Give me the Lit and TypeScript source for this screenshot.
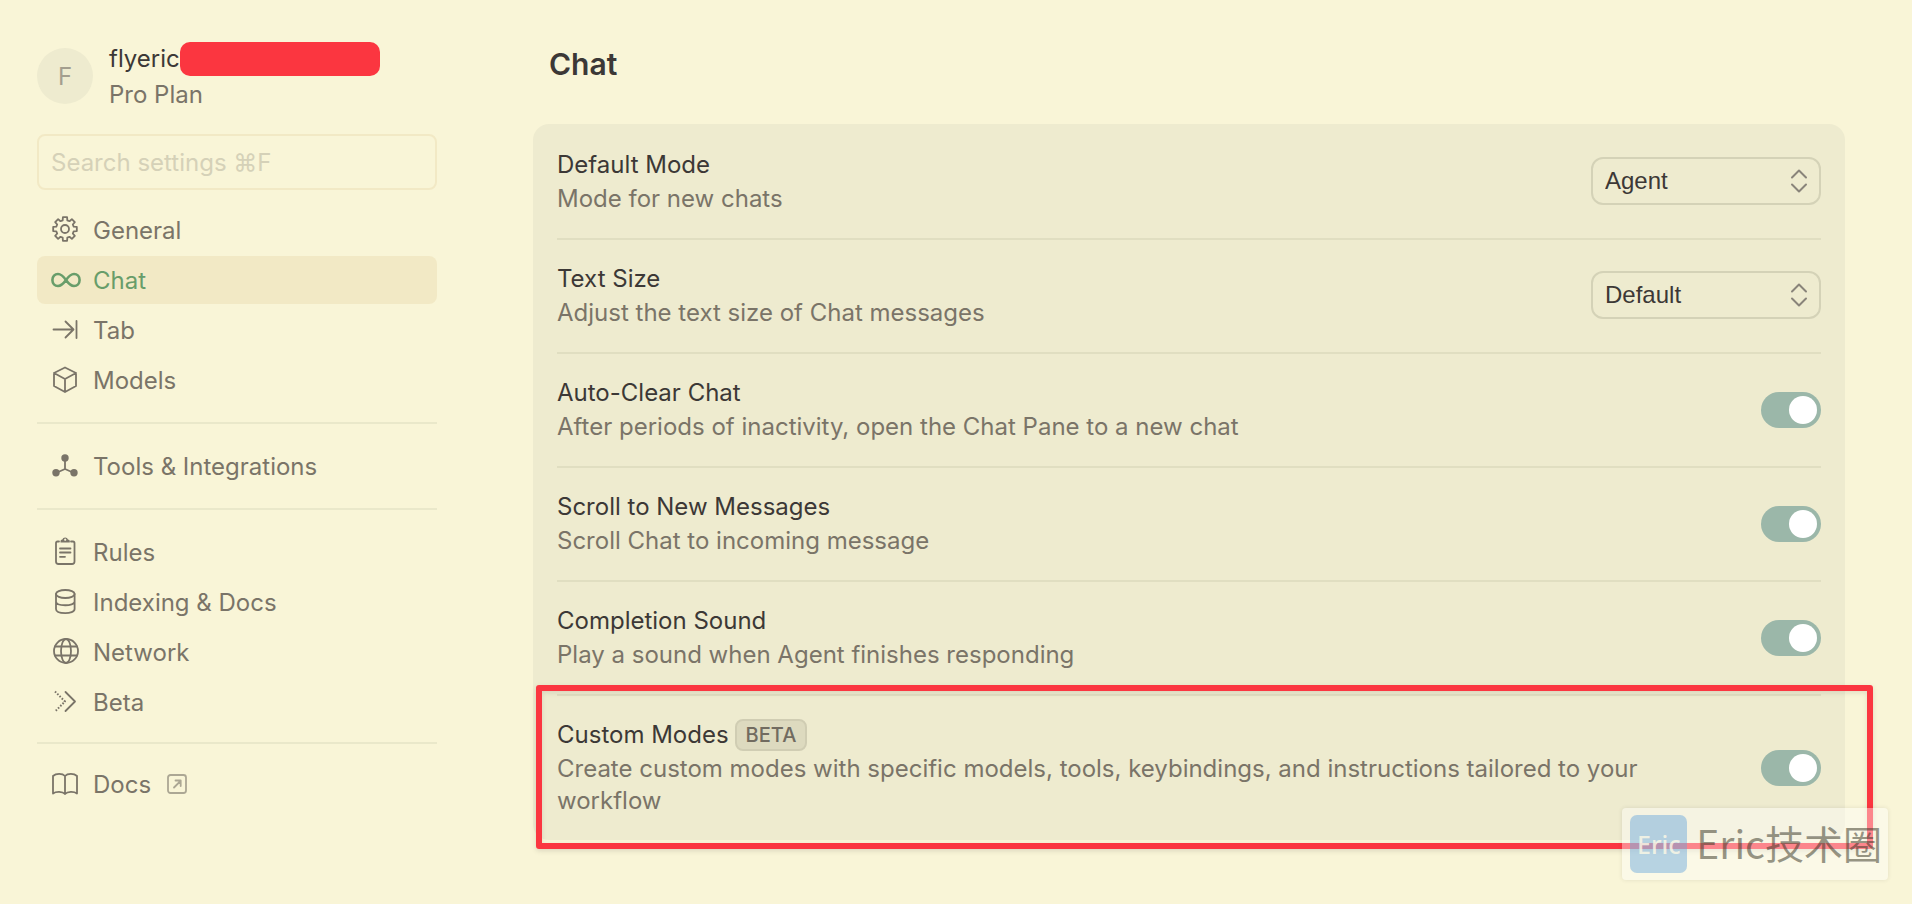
import { LitElement, html, css, svg, nothing, type TemplateResult } from "lit";
import { customElement, property, state } from "lit/decorators.js";
import { classMap } from "lit/directives/class-map.js";

/** Outline of an eight-toothed cog centred on (cx, cy). */
const cogPath = (cx: number, cy: number): string => {
  const points: string[] = [];
  for (let i = 0; i < 8; i++) {
    const mid = i * 45 - 90;
    for (const [radius, offset] of [[9, -15], [12, -10], [12, 10], [9, 15]]) {
      const a = ((mid + offset) * Math.PI) / 180;
      points.push(`${(cx + radius * Math.cos(a)).toFixed(2)} ${(cy + radius * Math.sin(a)).toFixed(2)}`);
    }
  }
  return `M${points.join("L")}Z`;
};

const icons: Record<string, TemplateResult> = {
  general: svg`<path d=${cogPath(14, 13)} /><circle cx="14" cy="13" r="4" />`,
  chat: svg`<path stroke-width="2.6" d="M15 14C12.5 10.5 10.5 8 7 8C3.8 8 1.4 10.6 1.4 14S3.8 20 7 20C10.5 20 12.5 17.5 15 14C17.5 10.5 19.5 8 23 8C26.2 8 28.6 10.6 28.6 14S26.2 20 23 20C19.5 20 17.5 17.5 15 14Z" />`,
  tab: svg`<path d="M2.5 13.5H22M14.5 5.5L22.5 13.5L14.5 21.5M25.5 5V22" />`,
  models: svg`<path d="M14 1.5L25 7V20L14 26L3 20V7ZM3 7L14 13L25 7M14 13V26" />`,
  tools: svg`<path d="M14 6V17M5 21L14 17L23 21" /><g fill="currentColor" stroke="none"><circle cx="14" cy="6" r="3.7" /><circle cx="5" cy="20.8" r="3.7" /><circle cx="23" cy="20.8" r="3.7" /></g>`,
  rules: svg`<path d="M8 3.5H6.5Q5 3.5 5 5V23.5Q5 26 7.5 26H21Q23.5 26 23.5 23.5V5Q23.5 3.5 22 3.5H20M9 10.5H19.5M9 14.5H19.5M9 18.8H14" /><path fill="currentColor" stroke="none" fill-rule="evenodd" d="M9.5 4.5V3Q9.5 1.5 11.3 1.5A3 3 0 0 1 17 1.5Q18.8 1.5 18.8 3V4.5ZM14.2 0.6a1.1 1.1 0 1 0 0.01 0Z" />`,
  indexing: svg`<ellipse cx="14.3" cy="6" rx="9.3" ry="4" /><path d="M5 6V21C5 26.5 23.6 26.5 23.6 21V6M5 13.5C5 18.5 23.6 18.5 23.6 13.5" />`,
  network: svg`<circle cx="15" cy="13" r="12" /><ellipse cx="15" cy="13" rx="5" ry="12" /><path d="M4 8.5H26M4 17.5H26" />`,
  beta: svg`<path d="M14.5 4L24 13.5L14.5 23" /><path stroke-linecap="butt" stroke-width="2" stroke-dasharray="1.6 1.6" d="M4 3.5L14 13.5L4 23.5" />`,
  docs: svg`<path d="M14 6C11.5 3.2 5 3.2 2 6V23.5C5 21.3 11.5 21.3 14 24C16.5 21.3 23 21.3 26 23.5V6C23 3.2 16.5 3.2 14 6ZM14 6V24" />`,
};

interface NavItem {
  id: string;
  label: string;
  external?: boolean;
}

interface Setting {
  id: string;
  title: string;
  detail: string;
  options?: string[];
  badge?: string;
  highlighted?: boolean;
}

const navGroups: NavItem[][] = [
  [
    { id: "general", label: "General" },
    { id: "chat", label: "Chat" },
    { id: "tab", label: "Tab" },
    { id: "models", label: "Models" },
  ],
  [{ id: "tools", label: "Tools & Integrations" }],
  [
    { id: "rules", label: "Rules" },
    { id: "indexing", label: "Indexing & Docs" },
    { id: "network", label: "Network" },
    { id: "beta", label: "Beta" },
  ],
  [{ id: "docs", label: "Docs", external: true }],
];

const settings: Setting[] = [
  { id: "mode", title: "Default Mode", detail: "Mode for new chats", options: ["Agent"] },
  { id: "size", title: "Text Size", detail: "Adjust the text size of Chat messages", options: ["Default"] },
  { id: "clear", title: "Auto-Clear Chat", detail: "After periods of inactivity, open the Chat Pane to a new chat" },
  { id: "scroll", title: "Scroll to New Messages", detail: "Scroll Chat to incoming message" },
  { id: "sound", title: "Completion Sound", detail: "Play a sound when Agent finishes responding" },
  {
    id: "custom",
    title: "Custom Modes",
    detail: "Create custom modes with specific models, tools, keybindings, and instructions tailored to your workflow",
    badge: "BETA",
    highlighted: true,
  },
];

@customElement("settings-row")
class SettingsRow extends LitElement {
  @property({ attribute: false }) setting!: Setting;

  static styles = css`
    :host {
      display: block;
    }
    .row {
      position: relative;
      display: flex;
      align-items: center;
      justify-content: space-between;
      gap: 48px;
      padding: 23px 0;
      border-top: 2px solid var(--row-line, #e0dec1);
    }
    .text {
      display: flex;
      flex-direction: column;
      gap: 2px;
      min-width: 0;
    }
    .head {
      display: flex;
      align-items: center;
      gap: 6px;
      height: 32px;
    }
    .detail {
      margin: 0;
      color: #7a7468;
    }
    .badge {
      box-sizing: border-box;
      height: 32px;
      padding: 0 9px;
      border: 2px solid #d0cdb3;
      border-radius: 8px;
      background: #dddabf;
      color: #716b60;
      font-size: 20px;
      line-height: 28px;
      font-weight: 500;
    }
    .picker {
      position: relative;
      flex: 0 0 230px;
      padding-bottom: 2px;
    }
    .select {
      box-sizing: border-box;
      display: block;
      width: 100%;
      height: 48px;
      padding: 0 44px 2px 12px;
      appearance: none;
      border: 2px solid #d4d2b7;
      border-radius: 12px;
      background: transparent;
      color: #3c3836;
      font: 24px "Liberation Sans", Arial, sans-serif;
    }
    .arrows {
      position: absolute;
      top: 12px;
      right: 13px;
      width: 18px;
      height: 24px;
      pointer-events: none;
      fill: none;
      stroke: #89847a;
      stroke-width: 2;
      stroke-linecap: round;
      stroke-linejoin: round;
    }
    .toggle {
      flex: none;
      display: flex;
      align-items: center;
      box-sizing: border-box;
      width: 60px;
      height: 36px;
      margin: 0;
      padding: 4px;
      appearance: none;
      border-radius: 18px;
      background: #cfccb3;
    }
    .toggle::before {
      content: "";
      width: 28px;
      height: 28px;
      border-radius: 50%;
      background: #fff;
    }
    .toggle:checked {
      justify-content: flex-end;
      background: #9bb7a9;
    }
    .frame {
      position: absolute;
      inset: -11px -52px -9px -21px;
      border: 6px solid #fb3640;
      border-radius: 3px;
      box-shadow: 0 2px 5px rgba(60, 56, 54, 0.15), inset 0 2px 5px rgba(60, 56, 54, 0.12);
      pointer-events: none;
    }
  `;

  render() {
    const s = this.setting;
    return html`
      <div class="row">
        <div class="text">
          <div class="head">
            <label for="control">${s.title}</label>
            ${s.badge ? html`<span class="badge">${s.badge}</span>` : nothing}
          </div>
          <p class="detail" id="detail">${s.detail}</p>
        </div>
        ${s.options
          ? html`<div class="picker">
              <select class="select" id="control" aria-describedby="detail">
                ${s.options.map((o) => html`<option>${o}</option>`)}
              </select>
              <svg class="arrows" viewBox="0 0 18 24" aria-hidden="true">
                <path d="M2 8.5L9 1.5L16 8.5M2 15.5L9 22.5L16 15.5" />
              </svg>
            </div>`
          : html`<input class="toggle" id="control" type="checkbox" role="switch" aria-describedby="detail" checked />`}
        ${s.highlighted ? html`<div class="frame"></div>` : nothing}
      </div>
    `;
  }
}

@customElement("app-root")
class AppRoot extends LitElement {
  @state() private current = "chat";

  static styles = css`
    :host {
      position: relative;
      display: flex;
      align-items: flex-start;
      gap: 96px;
      box-sizing: border-box;
      min-height: 100vh;
      padding: 40px 67px 24px 37px;
      background: #f9f5d7;
      color: #3c3836;
      font: 24px/32px Inter, "Noto Sans", sans-serif;
    }
    .sidebar {
      flex: 0 0 400px;
    }
    .account {
      display: flex;
      align-items: center;
      gap: 16px;
      height: 72px;
      margin-bottom: 22px;
      line-height: 36px;
    }
    .avatar {
      display: grid;
      place-items: center;
      width: 56px;
      height: 56px;
      border-radius: 50%;
      background: #eeebcf;
      color: #a39e8e;
    }
    .who,
    .label {
      padding-top: 2px;
    }
    .name {
      display: flex;
      align-items: center;
    }
    .redaction {
      width: 200px;
      height: 34px;
      border-radius: 10px;
      background: #fb3640;
    }
    .plan,
    .item {
      color: #7a7468;
    }
    .search {
      display: block;
      box-sizing: border-box;
      width: 100%;
      height: 56px;
      margin-bottom: 16px;
      padding: 0 12px;
      border: 2px solid #f2e9c5;
      border-radius: 8px;
      background: transparent;
      color: inherit;
      font: inherit;
    }
    .search::placeholder {
      color: #d5d1b8;
      opacity: 1;
    }
    .group {
      display: flex;
      flex-direction: column;
      gap: 2px;
      margin: 0;
      padding: 0 0 18px;
      list-style: none;
    }
    .group + .group {
      padding-top: 18px;
      border-top: 2px solid #eae8ca;
    }
    .group:nth-last-child(2) {
      padding-bottom: 16px;
    }
    .group:last-child {
      padding-top: 16px;
    }
    .item {
      display: flex;
      align-items: center;
      gap: 14px;
      height: 48px;
      padding: 0 14px;
      border-radius: 8px;
      box-sizing: border-box;
      text-decoration: none;
    }
    .item.active {
      background: #f2e9c5;
      color: #689d6a;
    }
    .icon,
    .external {
      flex: none;
      overflow: visible;
      fill: none;
      stroke: currentColor;
      stroke-width: 1.8;
      stroke-linecap: round;
      stroke-linejoin: round;
    }
    .icon {
      width: 28px;
      height: 28px;
    }
    .external {
      width: 20px;
      height: 20px;
      margin-left: 2px;
      opacity: 0.6;
    }
    .content {
      flex: 1;
      min-width: 0;
    }
    .heading {
      margin: 0 0 40px;
      padding: 4px 16px 0;
      font-size: 30px;
      line-height: 40px;
      font-weight: 600;
    }
    .panel {
      padding: 0 24px;
      border-radius: 16px;
      background: #eeebcf;
    }
    .panel > :first-child {
      --row-line: transparent;
    }
    .watermark {
      position: absolute;
      right: 24px;
      bottom: 24px;
      display: flex;
      align-items: center;
      gap: 9px;
      box-sizing: border-box;
      height: 72px;
      padding: 0 6px 0 8px;
      border-radius: 4px;
      background: rgba(255, 255, 255, 0.4);
      box-shadow: 0 0 4px rgba(60, 56, 54, 0.12);
      color: rgba(50, 48, 30, 0.5);
      font: 39px/48px "Noto Sans CJK SC", sans-serif;
    }
    .brand {
      padding-bottom: 4px;
    }
    .mark {
      display: grid;
      place-items: center;
      width: 57px;
      height: 58px;
      border-radius: 7px;
      background: rgba(100, 165, 220, 0.45);
      color: rgba(255, 250, 230, 0.8);
      font: 500 25px/32px "Noto Sans", sans-serif;
    }
  `;

  private renderItem(item: NavItem) {
    return html`<li>
      <a
        class=${classMap({ item: true, active: item.id === this.current })}
        href="#${item.id}"
        aria-current=${item.id === this.current ? "page" : nothing}
        @click=${() => {
          if (!item.external) this.current = item.id;
        }}
      >
        <svg class="icon" viewBox="0 0 28 28" aria-hidden="true">${icons[item.id]}</svg>
        <span class="label">${item.label}</span>
        ${item.external
          ? html`<svg class="external" viewBox="0 0 20 20" aria-hidden="true">
              <rect x="1" y="1" width="18" height="18" rx="2.5" />
              <path d="M7 13.5L13.5 7M8.5 6.5H13.7V12" />
            </svg>`
          : nothing}
      </a>
    </li>`;
  }

  render() {
    return html`
      <aside class="sidebar">
        <div class="account">
          <div class="avatar"><span class="label">F</span></div>
          <div class="who">
            <div class="name">flyeric<span class="redaction"></span></div>
            <div class="plan">Pro Plan</div>
          </div>
        </div>
        <input class="search" type="search" aria-label="Search settings" placeholder="Search settings ⌘F" />
        <nav>${navGroups.map((g) => html`<ul class="group">${g.map((i) => this.renderItem(i))}</ul>`)}</nav>
      </aside>
      <main class="content">
        <h1 class="heading">Chat</h1>
        <section class="panel">
          ${settings.map((s) => html`<settings-row .setting=${s}></settings-row>`)}
        </section>
      </main>
      <div class="watermark"><span class="mark">Eric</span><span class="brand">Eric技术圈</span></div>
    `;
  }
}
